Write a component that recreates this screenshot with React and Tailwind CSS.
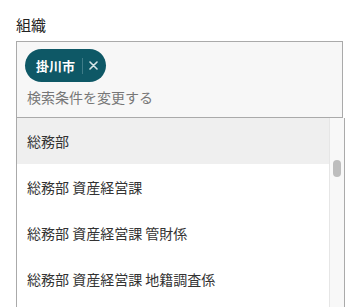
export default function App() {
  const items = [
    "総務部",
    "総務部 資産経営課",
    "総務部 資産経営課 管財係",
    "総務部 資産経営課 地籍調査係",
  ];

  return (
    <div className="w-[361px] h-[307px] overflow-hidden bg-white pl-4 pt-[14px] font-['Noto_Sans_CJK_JP',sans-serif]">
      <div className="text-[15px] leading-[22px] text-[#222]">組織</div>

      <div className="mt-[5px] w-[327px] h-[77px] border border-[#aaa] bg-[#f7f7f7] pl-2 pt-[7px]">
        <div className="inline-flex items-center h-[33px] rounded-full bg-[#0e5866] pl-[11px] pr-[8px]">
          <span className="text-[13px] font-bold leading-none text-white">掛川市</span>
          <span className="ml-[7px] w-px h-4 bg-[#3f7c88]"></span>
          <svg className="ml-[6px]" width="9" height="9" viewBox="0 0 9 9">
            <path d="M1 1L8 8M8 1L1 8" stroke="#d6e4e7" strokeWidth="1.6" strokeLinecap="round" />
          </svg>
        </div>
        <div className="mt-[4px] pl-[2px] text-[14px] leading-[22px] text-[#777]">検索条件を変更する</div>
      </div>

      <div className="flex w-[329px] h-[200px] border-x border-[#aaa]">
        <ul className="flex-1">
          {items.map((t, i) => (
            <li
              key={t}
              className={`h-[46px] flex items-center pl-[10px] text-[14px] text-[#333] ${i === 0 ? "bg-[#efefef]" : ""}`}
            >
              {t}
            </li>
          ))}
        </ul>
        <div className="w-[15px] border-l border-[#e6e6e6] bg-[#f8f8f8] pt-[42px] pl-[3px]">
          <div className="w-2 h-[17px] rounded-full bg-[#bdbdbd]"></div>
        </div>
      </div>
    </div>
  );
}
